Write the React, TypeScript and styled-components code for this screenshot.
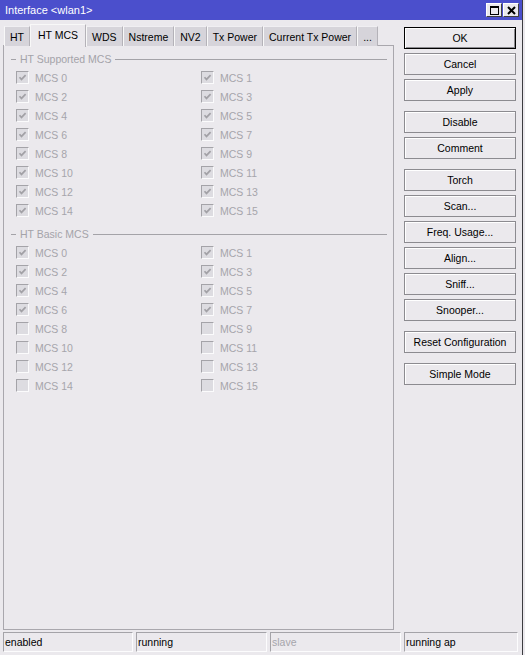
import styled, { createGlobalStyle } from "styled-components";

const GlobalStyle = createGlobalStyle`
  html, body {
    margin: 0;
    padding: 0;
    background: #ebe9ed;
  }
  body {
    font-family: "Liberation Sans", Arial, sans-serif;
    font-size: 10.5px;
    color: #000;
  }
`;

const tabs = ["HT", "HT MCS", "WDS", "Nstreme", "NV2", "Tx Power", "Current Tx Power", "..."];

const buttonGroups = [
  ["OK", "Cancel", "Apply"],
  ["Disable", "Comment"],
  ["Torch", "Scan...", "Freq. Usage...", "Align...", "Sniff...", "Snooper..."],
  ["Reset Configuration"],
  ["Simple Mode"],
];

const mcs = Array.from({ length: 16 }, (_, i) => i);

const CheckMark = () => (
  <svg width="11" height="11" viewBox="0 0 11 11">
    <path d="M2.5 5.2 L4.5 7.4 L8.6 3.2" fill="none" stroke="#a2a1a6" strokeWidth="1.7" />
  </svg>
);

const McsSection = ({ title, checkedUpTo }: { title: string; checkedUpTo: number }) => (
  <>
    <LegendRow>
      <LegendDash />
      <LegendText>{title}</LegendText>
      <LegendLine />
    </LegendRow>
    <CheckGrid>
      {mcs.map((n) => (
        <CheckRow key={n}>
          <CheckBox>{n < checkedUpTo ? <CheckMark /> : null}</CheckBox>
          <CheckLabel>MCS {n}</CheckLabel>
        </CheckRow>
      ))}
    </CheckGrid>
  </>
);

const App = () => {
  return (
    <>
      <GlobalStyle />
      <Window>
        <TitleBar>
          <TitleText>Interface &lt;wlan1&gt;</TitleText>
          <TitleButtons>
            <TitleBtn>
              <RestoreIcon />
            </TitleBtn>
            <TitleBtn>
              <svg width="9" height="9" viewBox="0 0 9 9">
                <path d="M1 1 L8 8 M8 1 L1 8" stroke="#000" strokeWidth="2" />
              </svg>
            </TitleBtn>
          </TitleButtons>
        </TitleBar>

        <Body>
          <LeftCol>
            <TabStrip>
              {tabs.map((t) => (
                <Tab key={t} $active={t === "HT MCS"}>
                  {t}
                </Tab>
              ))}
            </TabStrip>
            <Panel>
              <McsSection title="HT Supported MCS" checkedUpTo={16} />
              <McsSection title="HT Basic MCS" checkedUpTo={8} />
            </Panel>
          </LeftCol>

          <RightCol>
            {buttonGroups.map((group, gi) => (
              <ButtonGroup key={gi}>
                {group.map((b) => (
                  <ActionButton key={b} $default={b === "OK"}>
                    {b}
                  </ActionButton>
                ))}
              </ButtonGroup>
            ))}
          </RightCol>
        </Body>

        <StatusBar>
          <StatusCell $w={130}>enabled</StatusCell>
          <StatusCell $w={131}>running</StatusCell>
          <StatusCell $w={131} $dim>
            slave
          </StatusCell>
          <StatusCell $w={114}>running ap</StatusCell>
        </StatusBar>
      </Window>
    </>
  );
};

export default App;

// styled-components
const Window = styled.div`
  width: 522px;
  height: 655px;
  border-right: 1px solid #3c3c40;
  display: flex;
  flex-direction: column;
  background: #ebe9ed;
`;

const TitleBar = styled.div`
  height: 20px;
  flex-shrink: 0;
  background: #4b4fcc;
  display: flex;
  align-items: center;
  justify-content: space-between;
  padding: 0 3px 0 5px;
`;

const TitleText = styled.span`
  color: #fff;
  font-size: 11px;
`;

const TitleButtons = styled.div`
  display: flex;
  gap: 1px;
`;

const TitleBtn = styled.div`
  width: 14px;
  height: 12px;
  background: #ebe9ed;
  border: 1px solid;
  border-color: #fff #404040 #404040 #fff;
  display: flex;
  align-items: center;
  justify-content: center;
`;

const RestoreIcon = styled.span`
  width: 7px;
  height: 6px;
  border: 1px solid #000;
  border-top-width: 2px;
`;

const Body = styled.div`
  flex: 1;
  display: flex;
  min-height: 0;
`;

const LeftCol = styled.div`
  width: 391px;
  margin-left: 3px;
  padding-top: 3px;
  display: flex;
  flex-direction: column;
`;

const TabStrip = styled.div`
  display: flex;
  align-items: flex-end;
  height: 23px;
  margin-left: 1px;
  position: relative;
  z-index: 1;
`;

const Tab = styled.div<{ $active?: boolean }>`
  height: ${(p) => (p.$active ? "23px" : "20px")};
  margin-bottom: ${(p) => (p.$active ? "-1px" : "0")};
  padding: ${(p) => (p.$active ? "0 7px 2px" : "0 5px")};
  display: flex;
  align-items: center;
  box-sizing: border-box;
  background: ${(p) => (p.$active ? "#ebe9ed" : "#d6d4da")};
  border: 1px solid #b4b2b8;
  border-bottom: none;
  border-left-color: #f8f8f8;
  border-top-color: ${(p) => (p.$active ? "#f8f8f8" : "#f0eff2")};
  font-size: 10.5px;
  white-space: nowrap;
`;

const Panel = styled.div`
  flex: 1;
  border: 1px solid #a9a7ad;
  background: #ebe9ed;
  margin-top: -1px;
`;

const LegendRow = styled.div`
  display: flex;
  align-items: center;
  height: 14px;
  margin: 6px 6px 0 7px;
  gap: 4px;
`;

const LegendDash = styled.span`
  width: 5px;
  border-top: 1px solid #a4a3a8;
`;

const LegendText = styled.span`
  color: #a4a3a9;
  font-size: 10.5px;
`;

const LegendLine = styled.span`
  flex: 1;
  border-top: 1px solid #a4a3a8;
`;

const CheckGrid = styled.div`
  display: grid;
  grid-template-columns: 185px 1fr;
  padding: 2px 0 1px 12px;
`;

const CheckRow = styled.div`
  height: 19px;
  display: flex;
  align-items: center;
  gap: 6px;
`;

const CheckBox = styled.span`
  width: 13px;
  height: 13px;
  box-sizing: border-box;
  border: 1px solid;
  border-color: #a4a3a8 #fbfbfc #fbfbfc #a4a3a8;
  background: #dddce1;
  display: flex;
  align-items: center;
  justify-content: center;
`;

const CheckLabel = styled.span`
  color: #a6a5ab;
  font-size: 10.5px;
`;

const RightCol = styled.div`
  margin-left: 10px;
  padding-top: 7px;
  display: flex;
  flex-direction: column;
  gap: 10px;
`;

const ButtonGroup = styled.div`
  display: flex;
  flex-direction: column;
  gap: 4px;
`;

const ActionButton = styled.div<{ $default?: boolean }>`
  width: 112px;
  height: 22px;
  box-sizing: border-box;
  display: flex;
  align-items: center;
  justify-content: center;
  background: #ebe9ed;
  border: 1px solid ${(p) => (p.$default ? "#000" : "#8c8b90")};
  box-shadow: ${(p) =>
    p.$default ? "inset 1px 1px #fff, inset -1px -1px #8c8b90" : "inset 1px 1px #fff"};
  font-size: 10.5px;
`;

const StatusBar = styled.div`
  height: 25px;
  flex-shrink: 0;
  display: flex;
  gap: 3px;
  padding: 2px 0 0 3px;
  box-sizing: border-box;
`;

const StatusCell = styled.div<{ $w: number; $dim?: boolean }>`
  width: ${(p) => p.$w}px;
  height: 20px;
  box-sizing: border-box;
  border: 1px solid;
  border-color: #a4a3a8 #fcfcfd #fcfcfd #a4a3a8;
  padding-left: 1px;
  display: flex;
  align-items: center;
  color: ${(p) => (p.$dim ? "#a6a5ab" : "#000")};
  font-size: 10.5px;
`;
